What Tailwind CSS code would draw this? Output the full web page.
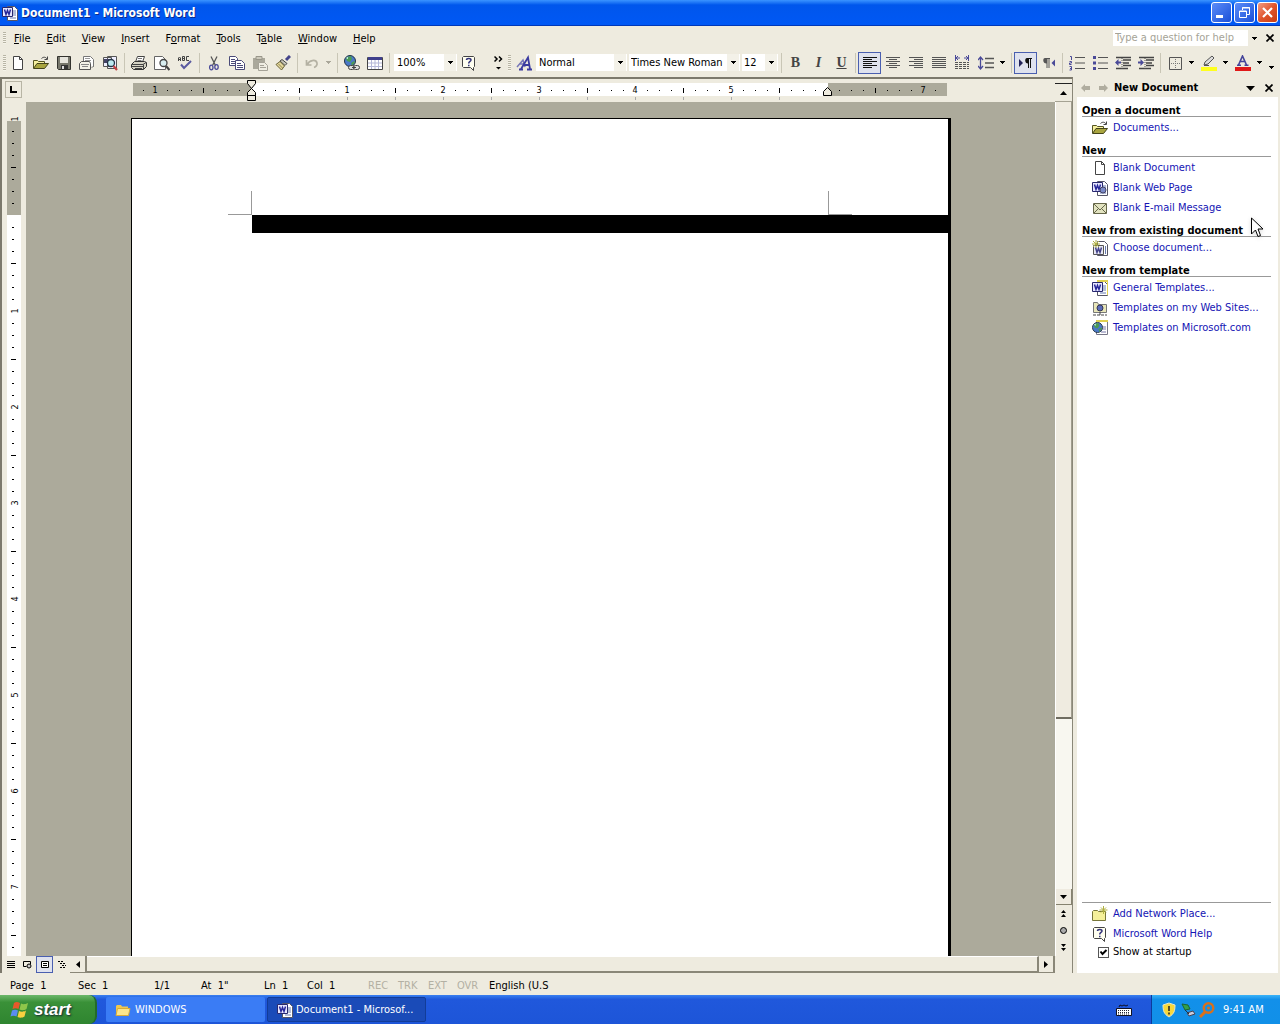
<!DOCTYPE html>
<html lang="en">
<head>
<meta charset="utf-8">
<title>Document1 - Microsoft Word</title>
<script src="https://cdn.jsdelivr.net/npm/@tailwindcss/browser@4"></script>
</head>
<body class="h-screen min-h-[600px] flex flex-col overflow-hidden bg-[#eeebdf] text-black text-[11px] leading-4 font-['DejaVu_Sans_Condensed','DejaVu_Sans',sans-serif] whitespace-nowrap select-none">

<!-- Shared icons -->
<svg class="hidden" aria-hidden="true">
  <symbol id="page" viewBox="0 0 16 16"><path d="M3.500 1.500h6l3 3v10h-9z" fill="#fff" stroke="#444"/><path d="M9.500 1.500v3h3" fill="none" stroke="#444"/></symbol>
  <symbol id="open" viewBox="0 0 16 16"><path d="M.5 13V5.500h4l1 1h6v2" fill="#f6f0a0" stroke="#555522"/><path d="M.5 13.500l3.500-5h11.500l-4 5z" fill="#a9a53f" stroke="#44441a"/><path d="M8.500 3.500c2-2 4.500-1.500 5.500.5M14.500 1.500v3h-3" fill="none" stroke="#444"/></symbol>
  <symbol id="help" viewBox="0 0 16 16"><path d="M2.500 1.500h10l1 1v9l-1 1v3l-3-3h-7l-1-1v-9z" fill="#fffff0" stroke="#444"/><path d="M5.500 5c0-2 4.500-2 4.500 0 0 1.500-2.300 1.500-2.300 3.500M7 10.500h1.500" fill="none" stroke="#33337a" stroke-width="1.500"/></symbol>
  <symbol id="word" viewBox="0 0 16 16"><path d="M5.500 1.500h7l3 3v11h-10z" fill="#fff" stroke="#556"/><path d="M11 6h3M11 8h3M11 10h3M8 13h6" stroke="#667ab0"/><path d="M.5 2.500h10v9H.5z" fill="#e8e8ff" stroke="#28286e"/><path d="M2.500 4.500l1.500 5 1.500-4 1.500 4 1.500-5" fill="none" stroke="#28289a" stroke-width="1.500"/></symbol>
  <symbol id="down" viewBox="0 0 5 3"><path d="M0 0h5v1H4v1H3v1H2V2H1V1H0z" fill="currentColor"/></symbol>
  <symbol id="folder" viewBox="0 0 16 16"><path d="M.5 14.500V5.500l1-1h4l1 1h7v9z" fill="#f5f09a" stroke="#77763a"/></symbol>
  <symbol id="globe" viewBox="0 0 12 12"><circle cx="6" cy="6" r="5.500" fill="#4a78c8" stroke="#234"/><path d="M3 2l4-1 1 3-2 3-3-1-1-2zM7 8l3-2 1 1-3 4z" fill="#4b9a55"/><path d="M2 3l2-1v2z" fill="#dff"/></symbol>
</svg>

<!-- Title bar -->
<header class="h-[26px] shrink-0 flex items-center gap-[3px] px-[2px] bg-linear-to-b from-[#3a93ff] via-[#0056ec] via-20% to-[#0058f5] border-b border-[#0038b8] text-white">
  <svg class="size-4"><use href="#word"/></svg>
  <h1 class="flex-1 pt-px text-[12px] font-bold [text-shadow:1px_1px_#0a2a8a]">Document1 - Microsoft Word</h1>
  <div class="flex gap-[2px]">
    <button aria-label="Minimize" class="size-[21px] rounded-[3px] border border-white bg-linear-to-br from-[#5c8cf8] to-[#1a4fd8]"><svg viewBox="0 0 19 19"><path d="M4 12h7v3H4z" fill="#fff"/></svg></button>
    <button aria-label="Restore" class="size-[21px] rounded-[3px] border border-white bg-linear-to-br from-[#5c8cf8] to-[#1a4fd8]"><svg viewBox="0 0 19 19" fill="none" stroke="#fff"><path d="M7.500 7V4.500h7v7H12M7 5h8"/><path d="M4.500 8h7v6.500h-7zM4 8.500h8"/></svg></button>
    <button aria-label="Close" class="size-[21px] rounded-[3px] border border-white bg-linear-to-br from-[#f09a80] via-[#e0552c] to-[#c83c10]"><svg viewBox="0 0 19 19"><path d="M5 5l9 9M14 5l-9 9" stroke="#fff" stroke-width="2.200"/></svg></button>
  </div>
</header>

<!-- Menu bar -->
<div class="h-6 shrink-0 flex items-center pl-[3px] pr-1">
  <span class="w-[3px] h-3 bg-[repeating-linear-gradient(#b8b5a5_0_1px,#f6f4ea_1px_2px)]"></span>
  <nav class="flex flex-1 gap-4 pl-[8px] pt-px">
    <button><u>F</u>ile</button><button><u>E</u>dit</button><button><u>V</u>iew</button><button><u>I</u>nsert</button><button>F<u>o</u>rmat</button><button><u>T</u>ools</button><button>T<u>a</u>ble</button><button><u>W</u>indow</button><button><u>H</u>elp</button>
  </nav>
  <input aria-label="Type a question for help" placeholder="Type a question for help" class="w-[135px] h-4 bg-white pl-[2px] placeholder:text-[#a5a396]">
  <button aria-label="Previous questions" class="w-3 h-4 grid place-items-center"><svg class="w-[5px] h-[3px]"><use href="#down"/></svg></button>
  <button aria-label="Close document" class="ml-1 w-3 h-4 grid place-items-center"><svg class="size-2" viewBox="0 0 8 8"><path d="M.5.5l7 7M7.500.5l-7 7" stroke="#000" stroke-width="1.700"/></svg></button>
</div>

<!-- Toolbars -->
<div class="h-[27px] shrink-0 flex items-center pl-[3px] pb-[2px] [&_.b]:w-[23px] [&_.b]:h-[22px] [&_.b]:shrink-0 [&_.b]:grid [&_.b]:place-items-center [&_.i]:size-4 [&_.s]:w-px [&_.s]:h-5 [&_.s]:ml-[3px] [&_.s]:mr-[2px] [&_.s]:bg-[#c9c6b6] [&_.s]:shrink-0 [&_.d]:h-[22px] [&_.d]:w-[11px] [&_.d]:shrink-0 [&_.d]:grid [&_.d]:place-items-center">
  <span class="w-[3px] h-4 bg-[repeating-linear-gradient(#b8b5a5_0_1px,#f6f4ea_1px_2px)]"></span>
  <button class="b" aria-label="New"><svg class="i"><use href="#page"/></svg></button>
  <button class="b" aria-label="Open"><svg class="i"><use href="#open"/></svg></button>
  <button class="b" aria-label="Save"><svg class="i" viewBox="0 0 16 16"><path d="M1.500 1.500h13v13h-12l-1-1z" fill="#77776c" stroke="#33332e"/><path d="M4 2h8v6H4z" fill="#e5e4dc"/><path d="M5 10h7v4H5z" fill="#333"/><path d="M6 11h2v3H6z" fill="#ddd"/></svg></button>
  <button class="b" aria-label="E-mail"><svg class="i" viewBox="0 0 16 16"><path d="M4.500 6V1.500h7l3 3V12" fill="#fff" stroke="#777"/><path d="M6 3.500h5M6 5.500h6" stroke="#999"/><path d="M.5 8.500l2-2h8l1 2v6H.5z" fill="#f3f2e8" stroke="#555"/><path d="M2 9.500h8M3 11.500h6M12.500 12.500l2-1" fill="none" stroke="#888"/></svg></button>
  <button class="b" aria-label="Search"><svg class="i" viewBox="0 0 16 16"><path d="M1.500 2.500h8v9h-8zM5.500 1.500h9v12h-9z" fill="#eef" stroke="#555"/><path d="M2 4h5v4H2z" fill="#446"/><circle cx="9" cy="8" r="3.500" fill="#bdeaf0" stroke="#234" stroke-width="1.300"/><path d="M11.500 11l3.500 4" stroke="#c34040" stroke-width="2.200"/></svg></button>
  <span class="s"></span>
  <button class="b" aria-label="Print"><svg class="i" viewBox="0 0 16 16"><path d="M4.500 7l2-5.500h7L11.500 7" fill="#fff" stroke="#444"/><path d="M7 3.500h4M6.500 5.500h4" stroke="#777"/><path d="M.5 9.500l3-3h10l2 1v4l-3 3H2.500l-2-2z" fill="#d5d3c4" stroke="#333"/><path d="M1 9.500h11l3-2M1 11.500h11M12.500 9.500v5M4 13.500h7" fill="none" stroke="#444"/></svg></button>
  <button class="b" aria-label="Print Preview"><svg class="i" viewBox="0 0 16 16"><path d="M.5 1.500h8l3 3v10H.5z" fill="#fff" stroke="#666"/><circle cx="9.500" cy="8" r="3.500" fill="#d8eef0" stroke="#444" stroke-width="1.300"/><path d="M12 11l3.500 4" stroke="#444" stroke-width="2.200"/></svg></button>
  <button class="b" aria-label="Spelling"><svg class="i" viewBox="0 0 16 16" fill="none"><path d="M1.500 6V3l1-1 1 1v3M1.500 4.500h2M5.500 1.500v4h2v-4zM5.500 3.500h2M12 1.500H9.500v4H12" stroke="#444"/><path d="M4 9.500l3 3.500 7-7" stroke="#5a5aa0" stroke-width="2"/></svg></button>
  <span class="s"></span>
  <button class="b" aria-label="Cut"><svg class="i" viewBox="0 0 16 16" fill="none"><path d="M5 1.500l4.500 9M11 1.500l-4.500 9" stroke="#555" stroke-width="1.300"/><ellipse cx="5.300" cy="12.500" rx="1.700" ry="2.300" stroke="#4a4a98" stroke-width="1.300"/><ellipse cx="10.500" cy="12" rx="1.700" ry="2.300" stroke="#4a4a98" stroke-width="1.300"/></svg></button>
  <button class="b" aria-label="Copy"><svg class="i" viewBox="0 0 16 16" fill="#fff" stroke="#4a4a78"><path d="M.5 1.500h6l2 2v7h-8z"/><path d="M2 4.500h4M2 6.500h4M2 8.500h4"/><path d="M6.500 5.500h6l3 3v6h-9z"/><path d="M8 8.500h4M8 10.500h6M8 12.500h6"/></svg></button>
  <button class="b" aria-label="Paste"><svg class="i" viewBox="0 0 16 16"><path d="M1 3h12v11H1z" fill="#aaa89b"/><path d="M4 1.500h6v3H4z" fill="#ccc9bb" stroke="#99968a"/><path d="M6.500 7.500h6l3 3v5h-9z" fill="#efede2" stroke="#a5a297"/><path d="M8 10.500h4M8 12.500h6" stroke="#a5a297"/></svg></button>
  <button class="b" aria-label="Format Painter"><svg class="i" viewBox="0 0 16 16"><path d="M15 1l-4 4" stroke="#44448a" stroke-width="3"/><path d="M7 4.500l5 4-2 2-5-4.500z" fill="#c8c6b8" stroke="#444"/><path d="M5 6.500l4.500 4.500-3 4L1 9.500z" fill="#e4d79c" stroke="#6a6338"/><path d="M3.500 9l4 4" stroke="#8f854e"/></svg></button>
  <span class="s"></span>
  <button class="b" aria-label="Undo" disabled><svg class="i" viewBox="0 0 16 16" fill="none"><path d="M3.500 9.500C5 5 12 4 13 8c.5 2-1 4-3 4.500M2.500 5v5h5" stroke="#b4b1a3" stroke-width="1.700"/></svg></button>
  <button class="d text-[#aaa79a]" aria-label="Undo list" disabled><svg class="w-[5px] h-[3px]"><use href="#down"/></svg></button>
  <span class="s"></span>
  <button class="b" aria-label="Insert Hyperlink"><svg class="i" viewBox="0 0 16 16"><use href="#globe" width="12" height="12"/><rect x="4.500" y="10.500" width="6" height="4" rx="2" fill="#ddd" stroke="#444"/><rect x="9.500" y="10.500" width="6" height="4" rx="2" fill="#ddd" stroke="#444"/><path d="M8 12.500h4" stroke="#444"/></svg></button>
  <button class="b" aria-label="Insert Table"><svg class="i" viewBox="0 0 16 16"><path d="M.5 2.500h15v12H.5z" fill="#fff" stroke="#444"/><path d="M1 2h14v3H1z" fill="#40408c"/><path d="M1 8h14M1 11.500h14M4.500 5v9M8 5v9M11.500 5v9" stroke="#b5b8d8"/></svg></button>
  <span class="s"></span>
  <label class="relative w-[63px] h-[17px] ml-[2px] bg-white"><select aria-label="Zoom" class="appearance-none w-full h-full pl-[3px] leading-[17px]"><option>100%</option></select><span class="absolute right-px top-0 h-full w-3 bg-[#f3f1e8] grid place-items-center pointer-events-none"><svg class="w-[5px] h-[3px]"><use href="#down"/></svg></span></label>
  <button class="b" aria-label="Word Help"><svg class="i"><use href="#help"/></svg></button>
  <button class="w-5 ml-2 mr-px h-[22px] grid place-items-center" aria-label="Toolbar Options"><svg class="w-[9px] h-4" viewBox="0 0 9 16"><path d="M.5 1.500l2.500 2.500-2.500 2.500M5 1.500L7.500 4 5 6.500" fill="none" stroke="#000" stroke-width="1.500"/><path d="M2 12h5l-2.500 2.500z"/></svg></button>
  <span class="w-[3px] h-4 -ml-px mr-px bg-[repeating-linear-gradient(#b8b5a5_0_1px,#f6f4ea_1px_2px)]"></span>
  <button class="b" aria-label="Styles and Formatting"><svg class="i" viewBox="0 0 16 16"><path d="M1 12L7 5l2 7M3 9h5" fill="none" stroke="#7777b8" stroke-width="1.500"/><path d="M5 14l7-11.500 2 11.500M8 10h6M11 14.500h5M3 14.500h4" fill="none" stroke="#3b3ba0" stroke-width="1.800"/></svg></button>
  <label class="relative w-[91px] h-[17px] ml-px bg-white"><select aria-label="Style" class="appearance-none w-full h-full pl-[3px] leading-[17px]"><option>Normal</option></select><span class="absolute right-px top-0 h-full w-3 bg-[#f3f1e8] grid place-items-center pointer-events-none"><svg class="w-[5px] h-[3px]"><use href="#down"/></svg></span></label>
  <label class="relative w-[111px] h-[17px] ml-[2px] bg-white"><select aria-label="Font" class="appearance-none w-full h-full pl-[2px] leading-[17px]"><option>Times New Roman</option></select><span class="absolute right-px top-0 h-full w-3 bg-[#f3f1e8] grid place-items-center pointer-events-none"><svg class="w-[5px] h-[3px]"><use href="#down"/></svg></span></label>
  <label class="relative w-[36px] h-[17px] ml-[2px] bg-white"><select aria-label="Font size" class="appearance-none w-full h-full pl-[2px] leading-[17px]"><option>12</option></select><span class="absolute right-px top-0 h-full w-3 bg-[#f3f1e8] grid place-items-center pointer-events-none"><svg class="w-[5px] h-[3px]"><use href="#down"/></svg></span></label>
  <span class="s"></span>
  <button class="b font-['Liberation_Serif',serif] font-bold text-[14px] text-[#444]">B</button>
  <button class="b font-['Liberation_Serif',serif] font-bold italic text-[14px] text-[#444]">I</button>
  <button class="b font-['Liberation_Serif',serif] font-bold underline text-[14px] text-[#444]">U</button>
  <span class="w-px h-5 mx-[2px] bg-[#c9c6b6]"></span>
  <button class="b border border-[#4a5fb0] bg-[#dfe2ee]" aria-label="Align Left"><svg class="i" viewBox="0 0 16 16"><path d="M1 2.500h14M1 4.500h9M1 6.500h14M1 8.500h9M1 10.500h14M1 12.500h9" stroke="#111"/></svg></button>
  <button class="b" aria-label="Center"><svg class="i" viewBox="0 0 16 16"><path d="M1 2.500h14M4 4.500h8M1 6.500h14M4 8.500h8M1 10.500h14M4 12.500h8" stroke="#555"/></svg></button>
  <button class="b" aria-label="Align Right"><svg class="i" viewBox="0 0 16 16"><path d="M1 2.500h14M6 4.500h9M1 6.500h14M6 8.500h9M1 10.500h14M6 12.500h9" stroke="#555"/></svg></button>
  <button class="b" aria-label="Justify"><svg class="i" viewBox="0 0 16 16"><path d="M1 2.500h14M1 4.500h14M1 6.500h14M1 8.500h14M1 10.500h14M1 12.500h14" stroke="#555"/></svg></button>
  <button class="b" aria-label="Distributed"><svg class="i" viewBox="0 0 16 16" fill="none"><path d="M1.500 0v6M14.500 0v6M2 3h4M14 3h-4M4 1L2 3l2 2M12 1l2 2-2 2" stroke="#4a4a98"/><path d="M1 7.500h14M1 9.500h14M1 11.500h14M1 13.500h14" stroke="#555" stroke-dasharray="3 1"/></svg></button>
  <button class="b ml-px" aria-label="Line Spacing"><svg class="i" viewBox="0 0 16 16"><path d="M2.500 2v12M0 5l2.500-3L5 5M0 11l2.500 3L5 11" stroke="#4a4a98" stroke-width="1.300" fill="none"/><path d="M7 3.500h9M7 8h9M7 12.500h9" stroke="#555" stroke-width="1.300"/></svg></button>
  <button class="d" aria-label="Line spacing list"><svg class="w-[5px] h-[3px]"><use href="#down"/></svg></button>
  <span class="s"></span>
  <button class="b border border-[#4a5fb0] bg-[#dfe2ee]" aria-label="Left-to-Right"><svg class="i" viewBox="0 0 16 16"><path d="M1 4l4 4-4 4z" fill="#22225a"/><path d="M9 3h5v1h-1v9h-1V4h-1v9h-1V8.500C6.500 8.500 6.500 3 9 3z" fill="#111"/></svg></button>
  <button class="b" aria-label="Right-to-Left"><svg class="i" viewBox="0 0 16 16"><path d="M14 4.500L10.500 8l3.500 3.500z" fill="#4a4a98"/><path d="M4 3h5v1H8.500v9h-1V4H6.500v9h-1V8.500C1.500 8.500 1.500 3 4 3z" fill="#555"/></svg></button>
  <span class="w-px h-5 mx-[2px] bg-[#c9c6b6]"></span>
  <button class="b" aria-label="Numbering"><svg class="i" viewBox="0 0 16 16"><path d="M6 2.500h10M6 8h10M6 13.500h10" stroke="#555"/><path d="M1 1.500h1.500V5M.5 6.500h2v1.500h-2v1.500h2M.5 11.500h2v3.500h-2M1 13.500h1" fill="none" stroke="#4a4a98"/></svg></button>
  <button class="b" aria-label="Bullets"><svg class="i" viewBox="0 0 16 16"><path d="M6 2.500h10M6 8h10M6 13.500h10" stroke="#555"/><path d="M1 1h3v3H1zM1 6.500h3v3H1zM1 12h3v3H1z" fill="#4a4a98"/></svg></button>
  <button class="b" aria-label="Decrease Indent"><svg class="i" viewBox="0 0 16 16"><path d="M1 2.500h15M8 5h8M8 8h6M8 10.500h8M1 13.500h12" stroke="#444" stroke-width="1.300"/><path d="M7 3v12" stroke="#555" stroke-dasharray="1 1"/><path d="M0 7.500L3.500 4v2.500H6v2H3.500V11z" fill="#4a4a98"/></svg></button>
  <button class="b" aria-label="Increase Indent"><svg class="i" viewBox="0 0 16 16"><path d="M1 2.500h15M8 5h8M8 8h6M8 10.500h8M1 13.500h12" stroke="#444" stroke-width="1.300"/><path d="M7 3v12" stroke="#555" stroke-dasharray="1 1"/><path d="M6 7.500L2.500 4v2.500H0v2h2.500V11z" fill="#4a4a98"/></svg></button>
  <span class="s"></span>
  <button class="b" aria-label="Outside Border"><svg class="i" viewBox="0 0 16 16"><path d="M2.500 2.500h12v12h-12z" fill="none" stroke="#555"/><path d="M8.500 4v10M4 8.500h10" stroke="#777" stroke-dasharray="1 1"/></svg></button>
  <button class="d" aria-label="Borders list"><svg class="w-[5px] h-[3px]"><use href="#down"/></svg></button>
  <button class="b" aria-label="Highlight"><svg class="i" viewBox="0 0 16 16"><path d="M0 12h16v4H0z" fill="#ffff1e"/><path d="M3 10l1-3 7-6 2 2-6 6z" fill="#ddd" stroke="#555"/><path d="M3 10.500h5" stroke="#555"/></svg></button>
  <button class="d" aria-label="Highlight list"><svg class="w-[5px] h-[3px]"><use href="#down"/></svg></button>
  <button class="b" aria-label="Font Color"><svg class="i" viewBox="0 0 16 16"><path d="M0 12h16v4H0z" fill="#e01818"/><path d="M3.500 10L7.500 1l4 9M5 6.500h5.500M2 10.200h4M9.500 10.200h4" fill="none" stroke="#44449a" stroke-width="1.600"/></svg></button>
  <button class="d" aria-label="Font color list"><svg class="w-[5px] h-[3px]"><use href="#down"/></svg></button>
  <button class="w-3 h-[22px] grid place-items-center pt-[10px]" aria-label="Toolbar Options"><svg class="w-[5px] h-[3px]"><use href="#down"/></svg></button>
</div>

<div class="flex-1 min-h-0 flex">
  <!-- Document window -->
  <main class="flex-1 min-w-0 flex flex-col border-t-2 border-l-2 border-[#7c796c] border-r border-r-[#8a8778]">
    <div class="h-[23px] shrink-0 flex">
      <div class="w-[24px] shrink-0 pt-[2px] pl-[3px]"><button aria-label="Left Tab" class="size-[17px] border border-[#b8b5a5] grid place-items-center"><svg class="size-[7px]" viewBox="0 0 7 7"><path d="M1 0v6h6" fill="none" stroke="#000" stroke-width="2"/></svg></button></div>
      <div class="flex-1 min-w-0 overflow-hidden"><svg id="hruler" class="block w-[940px] h-[23px] text-[9px]"></svg></div>
      <div class="w-[17px] shrink-0 flex flex-col"><div class="h-[5px] border-b border-[#222]"></div><button aria-label="Scroll up" class="h-[18px] grid place-items-center border-b border-[#a5a293]"><svg class="w-[7px] h-1" viewBox="0 0 7 4"><path d="M3.500 0L7 4H0z"/></svg></button></div>
    </div>
    <div class="flex-1 min-h-0 flex">
      <div class="w-[24px] shrink-0 overflow-hidden"><svg id="vruler" class="block w-[24px] h-[1100px] text-[9px]"></svg></div>
      <div class="flex-1 min-w-0 bg-[#acaa9b] pt-4 pl-[105px] flex overflow-hidden">
        <div class="w-[820px] shrink-0 bg-white border-t border-l border-r-[3px] border-black pt-[72px]">
          <div class="flex justify-between px-[96px]"><span class="size-6 border-r border-b border-[#999]"></span><span class="size-6 border-l border-b border-[#999]"></span></div>
          <div class="h-[18px] ml-[120px] bg-black"></div>
        </div>
      </div>
      <div class="w-[17px] shrink-0 flex flex-col bg-[#f8f7f0] border-l border-[#fff]">
        <div class="flex-[617] bg-[#efebe0] border-b-2 border-r border-[#a09d8e] border-b-[#6f6c60]"></div>
        <div class="flex-[170]"></div>
        <button aria-label="Scroll down" class="h-4 shrink-0 grid place-items-center bg-[#efebe0] border-r border-b border-[#85826f]"><svg class="w-[7px] h-1" viewBox="0 0 7 4"><path d="M3.500 4L7 0H0z"/></svg></button>
        <div class="h-[51px] shrink-0 flex flex-col bg-[#eeebdf] pr-px">
          <button aria-label="Previous page" class="flex-1 grid place-items-center"><svg class="w-[5px] h-[7px]" viewBox="0 0 5 7"><path d="M2.500 0L5 3H0zM2.500 4L5 7H0z"/></svg></button>
          <button aria-label="Select browse object" class="flex-1 grid place-items-center"><span class="size-[7px] rounded-full border border-black bg-[#aaa]"></span></button>
          <button aria-label="Next page" class="flex-1 grid place-items-center"><svg class="w-[5px] h-[7px]" viewBox="0 0 5 7"><path d="M2.500 3L5 0H0zM2.500 7L5 4H0z"/></svg></button>
        </div>
      </div>
    </div>
    <div class="h-[17px] shrink-0 flex">
      <button aria-label="Normal View" class="w-[17px] grid place-items-center"><svg class="w-2 h-[7px]" viewBox="0 0 8 7"><path d="M0 .5h8M0 2.500h8M0 4.500h8M0 6.500h8" stroke="#000"/></svg></button>
      <button aria-label="Web Layout View" class="w-[17px] grid place-items-center"><svg class="w-[9px] h-[8px]" viewBox="0 0 9 8"><path d="M.5 5.500v-5h7v3M.5 5.500h3" fill="none" stroke="#000"/><circle cx="6" cy="5" r="2" fill="#ccc" stroke="#000"/></svg></button>
      <button aria-label="Print Layout View" class="w-[17px] grid place-items-center border border-[#4a5fb0] bg-[#dfe2ee]"><svg class="w-2 h-[7px]" viewBox="0 0 8 7"><path d="M.5.5h7v6h-7z" fill="#fff" stroke="#000"/><path d="M2 2.500h4M2 4.500h4" stroke="#000"/></svg></button>
      <button aria-label="Outline View" class="w-[17px] grid place-items-center"><svg class="w-2 h-[7px]" viewBox="0 0 8 7"><path d="M0 .5h5M2 2.500h6M4 4.500h4M2 6.500h6" stroke="#000" stroke-dasharray="2 1"/></svg></button>
      <button aria-label="Scroll left" class="w-[17px] grid place-items-center border-r-2 border-b border-[#8a8778]"><svg class="w-1 h-[7px]" viewBox="0 0 4 7"><path d="M0 3.500L4 0v7z"/></svg></button>
      <div class="flex-1 border-t border-t-white border-b-2 border-r-2 border-[#8a8778]"></div>
      <button aria-label="Scroll right" class="w-[16px] grid place-items-center border-r-2 border-b border-[#8a8778]"><svg class="w-1 h-[7px]" viewBox="0 0 4 7"><path d="M4 3.500L0 0v7z"/></svg></button>
      <div class="w-[17px]"></div>
    </div>
  </main>

  <!-- Task pane -->
  <aside class="w-[207px] shrink-0 pl-1 pr-[2px] pt-[2px] flex flex-col">
    <div class="h-[18px] shrink-0 flex items-center pl-1 pr-[5px]">
      <button aria-label="Back" disabled><svg class="w-[9px] h-2" viewBox="0 0 9 8"><path d="M0 4l4-4v2h5v4H4v2z" fill="#b0ad9f"/></svg></button>
      <button aria-label="Forward" disabled class="ml-[9px]"><svg class="w-[9px] h-2" viewBox="0 0 9 8"><path d="M9 4L5 0v2H0v4h5v2z" fill="#b0ad9f"/></svg></button>
      <h2 class="flex-1 font-bold pl-[6px]">New Document</h2>
      <button aria-label="Other Task Panes"><svg class="w-[9px] h-[5px]" viewBox="0 0 9 5"><path d="M0 0h9L4.500 5z"/></svg></button>
      <button aria-label="Close pane" class="ml-[10px]"><svg class="size-2" viewBox="0 0 8 8"><path d="M.5.5l7 7M7.500.5l-7 7" stroke="#000" stroke-width="1.700"/></svg></button>
    </div>
    <div class="flex-1 bg-white flex flex-col pt-[3px] pl-[5px] pr-[7px] [&_h3]:font-bold [&_h3]:pt-[5px] [&_h3]:leading-[11px] [&_h3]:border-b [&_h3]:border-[#999] [&_h3]:mb-px [&_section]:pb-[2px] [&_a]:h-5 [&_a]:pl-[10px] [&_a]:flex [&_a]:items-center [&_a]:gap-[5px] [&_a]:text-[#1414b4] [&_svg]:size-4">
      <section><h3>Open a document</h3><a href="#"><svg><use href="#open"/></svg>Documents...</a></section>
      <section><h3>New</h3>
        <a href="#"><svg><use href="#page"/></svg>Blank Document</a>
        <a href="#"><svg viewBox="0 0 16 16"><use href="#word"/><circle cx="11" cy="10" r="3" fill="#7a8ac8" stroke="#446"/></svg>Blank Web Page</a>
        <a href="#"><svg viewBox="0 0 16 16"><path d="M1.500 3.500h13v10h-13z" fill="#e2e3c0" stroke="#66674a"/><path d="M2 4l6 6 6-6M2 13l4-4M14 13l-4-4" fill="none" stroke="#66674a"/></svg>Blank E-mail Message</a></section>
      <section><h3>New from existing document</h3><a href="#"><svg viewBox="0 0 16 16"><path d="M5.500 1.500h7l3 3v11h-10z" fill="#fff" stroke="#556"/><path d="M13.500 6v8" stroke="#667ab0"/><path d="M1.500 5.500h10v9h-10z" fill="#e8e8f4" stroke="#555"/><path d="M3.500 7.500l1.500 5 1.500-4 1.500 4 1.500-5" fill="none" stroke="#44448a" stroke-width="1.500"/><path d="M4 0v8M0 4h8M1 1l6 6M7 1L1 7" stroke="#b0b040"/></svg>Choose document...</a></section>
      <section><h3>New from template</h3>
        <a href="#"><svg viewBox="0 0 16 16"><use href="#word"/><path d="M5 0h11v2H5zM15 2h1v13h-1z" fill="#e0d050"/></svg>General Templates...</a>
        <a href="#"><svg viewBox="0 0 16 16"><path d="M1.500 12.500v-10h4l1 2h8v8z" fill="#e8e6b8" stroke="#777"/><circle cx="8" cy="8" r="3" fill="#5a6cb8" stroke="#335"/><path d="M8 12v3M1 15h14" stroke="#444" stroke-dasharray="3 1"/></svg>Templates on my Web Sites...</a>
        <a href="#"><svg viewBox="0 0 16 16"><path d="M4.500 1.500h11v13h-11z" fill="#fff" stroke="#778"/><path d="M4 0h12v2H4z" fill="#e0d050"/><path d="M11 7h3M11 9h3M9 12h5" stroke="#77a"/><use href="#globe" y="2" width="11" height="11"/></svg>Templates on Microsoft.com</a></section>
      <div class="mt-auto border-t border-[#999] pt-px pb-[13px]">
        <a href="#"><svg viewBox="0 0 16 16"><use href="#folder"/><path d="M11.500 0v8M7.500 4h8M9 1.500l5 5M14 1.500l-5 5" stroke="#b0b040"/></svg>Add Network Place...</a>
        <a href="#"><svg><use href="#help"/></svg>Microsoft Word Help</a>
        <label class="h-4 flex items-center gap-1 pl-4"><span class="relative size-[11px]"><input type="checkbox" checked class="absolute inset-0 appearance-none size-[11px] border border-[#555] bg-white"><svg class="absolute inset-0 !size-[11px] pointer-events-none" viewBox="0 0 11 11"><path d="M2.500 4.500L4.500 7l4-4" fill="none" stroke="#000" stroke-width="2"/></svg></span>Show at startup</label>
      </div>
    </div>
  </aside>
</div>

<!-- Status bar -->
<footer class="h-[22px] shrink-0 flex items-center pl-[10px] pt-1">
  <span class="w-[68px]">Page&nbsp; 1</span><span class="w-[76px]">Sec&nbsp; 1</span><span class="w-[47px]">1/1</span><span class="w-[63px]">At&nbsp; 1"</span><span class="w-[43px]">Ln&nbsp; 1</span><span class="w-[61px]">Col&nbsp; 1</span>
  <span class="w-[30px] text-[#b3b0a3]">REC</span><span class="w-[30px] text-[#b3b0a3]">TRK</span><span class="w-[29px] text-[#b3b0a3]">EXT</span><span class="w-8 text-[#b3b0a3]">OVR</span><span>English (U.S</span>
</footer>

<!-- Taskbar -->
<div class="h-[29px] shrink-0 flex items-stretch bg-linear-to-b from-[#3a80f0] via-[#2058dc] via-15% to-[#1d55d8] text-white">
  <button class="w-[97px] flex items-center gap-1 pl-[10px] rounded-r-lg bg-linear-to-b from-[#6cb86a] via-[#3a9138] via-25% to-[#2f8530] border-r-2 border-[#236b2a] text-[17px] font-bold italic font-['Liberation_Sans',sans-serif] [text-shadow:1px_1px_2px_#123]">
    <svg class="size-5" viewBox="0 0 20 20"><path d="M4 3c2-1.500 4-1 6 0L8.500 9c-2-1-4-1-6 0z" fill="#e8592b"/><path d="M11 3.500c2 1 4 1 7-.5l-1.500 6c-2 1.500-5 1.500-7 .5z" fill="#8fc64a"/><path d="M2 10.500c2-1 4-1 6 0l-1.500 6c-2-1-4-1-6 0z" fill="#5a8cf0"/><path d="M9 11c2 1 5 1 7-.5l-1.500 6c-2 1.500-5 1.500-7 .5z" fill="#f8d040"/></svg>start</button>
  <button class="ml-[9px] my-[2px] w-[159px] rounded-[2px] flex items-center gap-1 pl-[9px] bg-[#3a7cf5]"><svg class="size-4" viewBox="0 0 16 16"><path d="M1 13V4l1-1h4l1 1.500h6V13z" fill="#f0c850"/><path d="M1 13.500l1.500-7H15l-1.500 7z" fill="#fbe68c" stroke="#d8ac38"/></svg>WINDOWS</button>
  <button class="ml-[2px] my-[2px] w-[159px] rounded-[2px] flex items-center gap-[3px] pl-[9px] bg-[#1a4bb8] border border-[#123c98]"><svg class="size-4"><use href="#word"/></svg>Document1 - Microsof...</button>
  <div class="flex-1"></div>
  <button aria-label="Language bar" class="w-4 mr-[19px] grid place-items-center"><svg class="size-4" viewBox="0 0 16 16"><path d="M.5 6.500h15v7H.5z" fill="#fff" stroke="#112"/><path d="M2 8.500h12M2 10.500h12M2 12h12" stroke="#223" stroke-dasharray="1 1"/><path d="M3 5l1-2 2 1 2-1 2 1 2-1" fill="none" stroke="#112"/></svg></button>
  <div class="w-[129px] flex items-center pl-[9px] gap-[3px] border-l border-[#0c3c9c] bg-linear-to-b from-[#3ab4f8] via-[#1290ea] via-15% to-[#1190e8]">
    <svg class="size-4" viewBox="0 0 16 16"><path d="M8 1l6 2c0 6-1 9-6 12C3 12 2 9 2 3z" fill="#f8d83a" stroke="#e8e8c8"/><path d="M8 4v5M8 10.500v2" stroke="#222" stroke-width="1.500"/></svg>
    <svg class="size-4" viewBox="0 0 16 16"><path d="M2 2l6 1 2 4-5 1z" fill="#34a04a" stroke="#1a6630"/><path d="M7 11l6-2 2 3-6 2z" fill="#ccd" stroke="#445"/><path d="M5 8l4 4" stroke="#234"/></svg>
    <svg class="size-4" viewBox="0 0 16 16"><circle cx="9.500" cy="6" r="4.800" fill="none" stroke="#d8701c" stroke-width="2.400"/><circle cx="9.500" cy="6" r="1.500" fill="#d8701c"/><path d="M6 10l-5 5" stroke="#d8701c" stroke-width="3"/></svg>
    <time class="pl-[5px]">9:41 AM</time>
  </div>
</div>

<!-- Mouse pointer -->
<svg class="absolute left-[1251px] top-[217px] w-[13px] h-[21px] pointer-events-none drop-shadow-sm" viewBox="0 0 13 21"><path d="M.5 1v16l4-4 2.500 6.500 2.500-1L7 12h5z" fill="#fff" stroke="#000"/></svg>

<script>
  // Rulers: 96 px to the inch, a tick every eighth.
  const h = document.getElementById('hruler'), v = document.getElementById('vruler');
  const hx = 225, vy = 113; // origins inside each ruler
  let s = '<rect x="107" y="4" width="118" height="13" fill="#acaa9b"/><rect x="225" y="4" width="577" height="13" fill="#fff"/><rect x="802" y="4" width="119" height="13" fill="#acaa9b"/>';
  for (let i = -9; i <= 57; i++) {
    const x = hx + i * 12;
    if (i % 8 === 0) { if (i && i !== 48) s += `<text x="${x}" y="14" text-anchor="middle">${Math.abs(i / 8)}</text>`; }
    else if (i % 4 === 0) s += `<rect x="${x}" y="9" width="1" height="5"/>`;
    else s += `<rect x="${x}" y="11" width="1" height="1"/>`;
    if (i > 0 && i < 48 && i % 4 === 0) s += `<rect x="${x}" y="18" width="1" height="3" fill="#aaa"/>`;
  }
  s += '<path d="M221.500 1.500h8v3l-4 5-4-5zM221.500 16.500v-3l4-4 4 4v3zM221.500 16.500h8v5h-8z" fill="#eeebdf" stroke="#000"/>';
  s += '<path d="M797.500 16.500v-4l4-4 4 4v4z" fill="#eeebdf" stroke="#000"/>';
  h.innerHTML = s;
  s = '<rect x="5" y="19" width="14" height="94" fill="#acaa9b"/><rect x="5" y="113" width="14" height="987" fill="#fff"/>';
  for (let i = -8; i <= 61; i++) {
    const y = vy + i * 12;
    if (i % 8 === 0) { if (i) s += `<text x="0" y="0" text-anchor="middle" transform="translate(16 ${y}) rotate(-90)">${Math.abs(i / 8)}</text>`; }
    else if (i % 4 === 0) s += `<rect x="9" y="${y}" width="5" height="1"/>`;
    else s += `<rect x="10" y="${y}" width="2" height="1"/>`;
  }
  v.innerHTML = s;
</script>
</body>
</html>
